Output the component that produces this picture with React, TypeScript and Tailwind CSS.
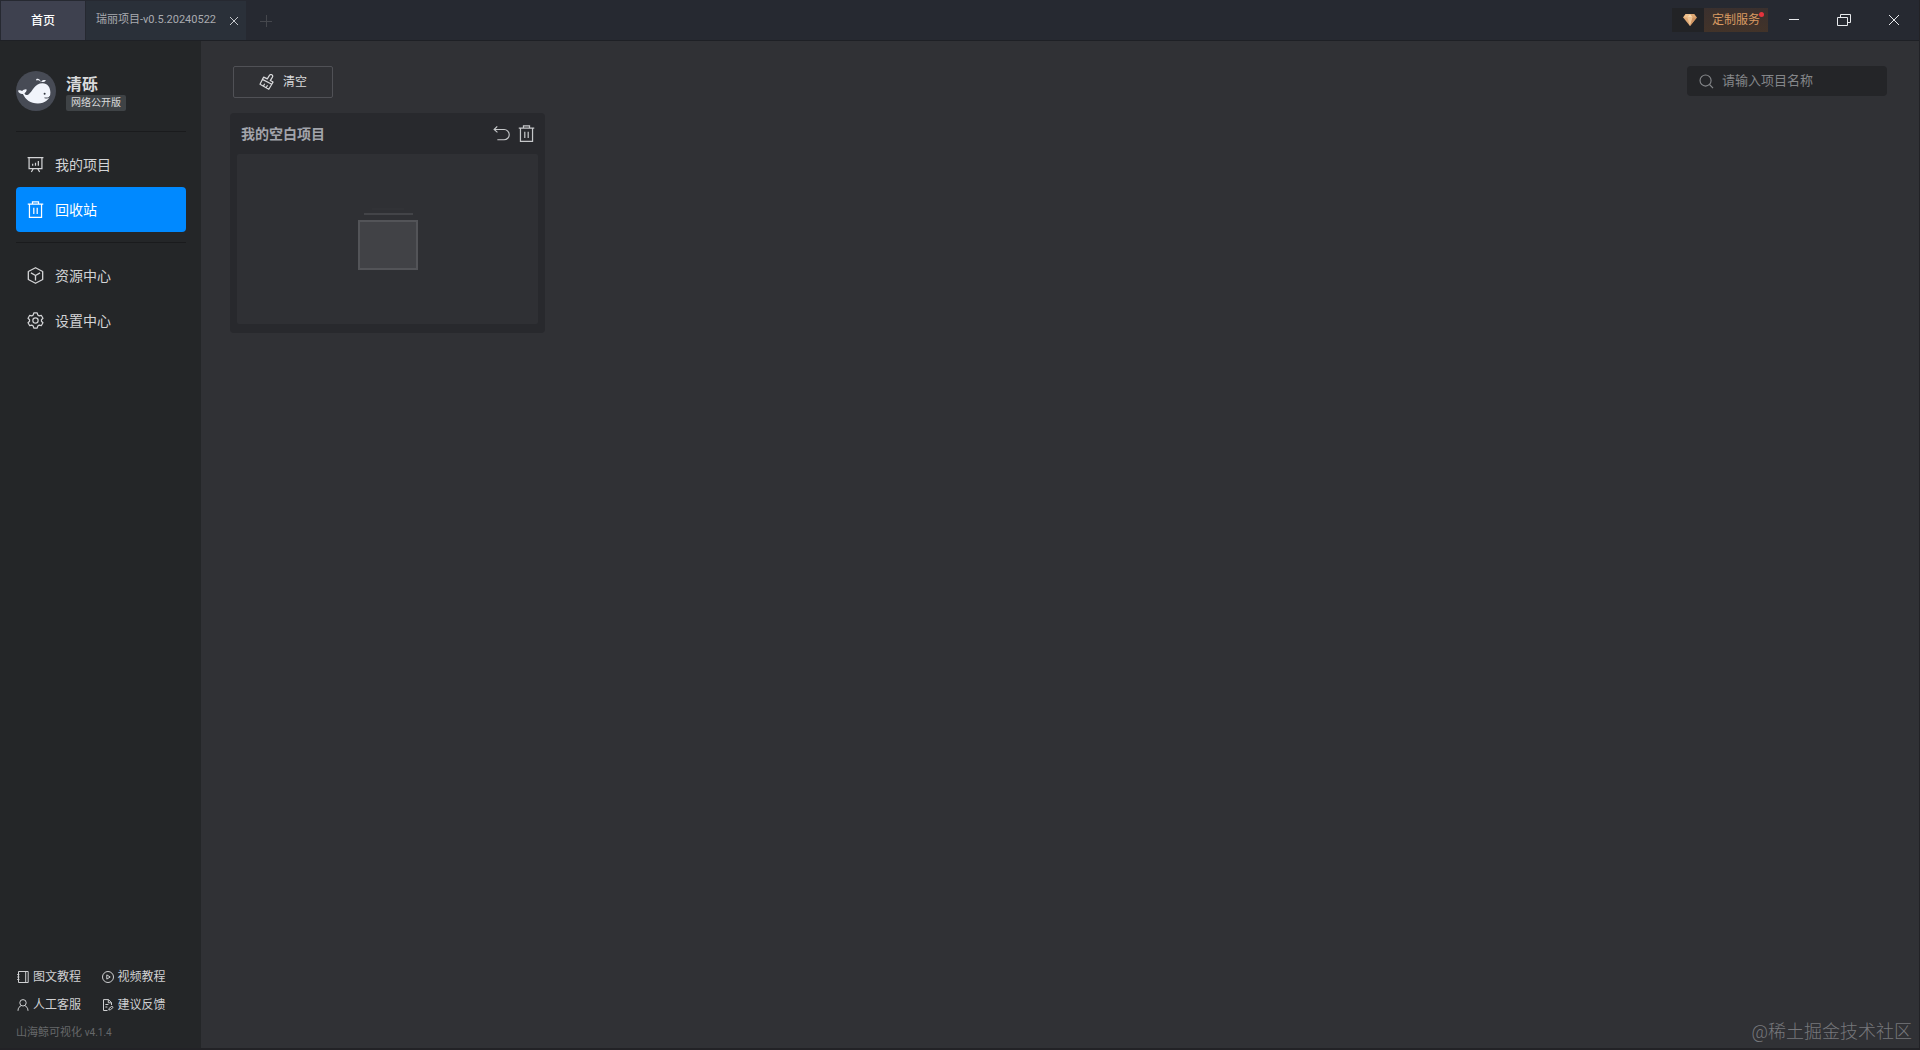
import React, { useState } from 'react';

interface IconProps {
  className?: string;
}

const stroke = {
  fill: 'none',
  stroke: 'currentColor',
  'aria-hidden': true,
} as const;

const BoardIcon: React.FC<IconProps> = ({ className }) => (
  <svg viewBox="0 0 18 18" className={className} strokeWidth="1.3" {...stroke}>
    <path d="M.6 1.7h16.8M2.2 1.7v11.6h13.6V1.7M6.8 13.3l-2.2 3.7M11.2 13.3l2.2 3.7M6 8.2v2M9 7.2v3M12 5.2v5" />
  </svg>
);

const TrashIcon: React.FC<IconProps> = ({ className }) => (
  <svg viewBox="0 0 18 18" className={className} strokeWidth="1.3" {...stroke}>
    <path d="M.8 3.3h16.4M5.8 3.3V1h6.4v2.3M2.6 3.3v14h12.8v-14M7.2 7.2v6.6M10.8 7.2v6.6" />
  </svg>
);

const CubeIcon: React.FC<IconProps> = ({ className }) => (
  <svg viewBox="0 0 18 18" className={className} strokeWidth="1.4" strokeLinejoin="round" {...stroke}>
    <path d="M9 .8l7.6 4v8.4L9 17.2l-7.6-4V4.8zM4.2 6.3L9 9l4.8-2.7M9 9v5.2" />
  </svg>
);

const GearIcon: React.FC<IconProps> = ({ className }) => (
  <svg viewBox="0 0 18 18" className={className} strokeWidth="1.3" strokeLinejoin="round" {...stroke}>
    <path d="M7.2 1h3.6l.6 2.2 1.5.9 2.2-.6 1.8 3.1-1.6 1.6v1.6l1.6 1.6-1.8 3.1-2.2-.6-1.5.9-.6 2.2H7.2l-.6-2.2-1.5-.9-2.2.6-1.8-3.1 1.6-1.6V8.2L1.1 6.6l1.8-3.1 2.2.6 1.5-.9z" />
    <circle cx="9" cy="9" r="2.8" />
  </svg>
);

const BrushIcon: React.FC<IconProps> = ({ className }) => (
  <svg viewBox="0 0 16 16" className={className} strokeWidth="1.2" strokeLinejoin="round" {...stroke}>
    <path d="M8.3 4.9l2.1-3.500a1.700 1.700 0 013 1.700l-2.100 3.500 2.700 1.500-1.200 2.200L3.400 5.400l1.300-2.300zM3.400 5.400L1 10.200l8.800 5.100 3-5M4.400 12.100l1.300-2.400M7.200 13.700l1.300-2.400" />
  </svg>
);

const UndoIcon: React.FC<IconProps> = ({ className }) => (
  <svg viewBox="0 0 18 18" className={className} strokeWidth="1.2" {...stroke}>
    <path d="M4.500 1.500L1.200 4.800l3.500 3M1.200 4.800h10.600a5.400 5.400 0 010 10.800H4.600" />
  </svg>
);

const SearchIcon: React.FC<IconProps> = ({ className }) => (
  <svg viewBox="0 0 16 16" className={className} strokeWidth="1.2" {...stroke}>
    <circle cx="7" cy="7" r="5.9" />
    <path d="M11.2 11.2l3.8 3.8" />
  </svg>
);

const BookIcon: React.FC<IconProps> = ({ className }) => (
  <svg viewBox="0 0 12 12" className={className} strokeWidth="1" {...stroke}>
    <path d="M1.500.5h9.700v11H1.500zM8.700.5v11M.2 3.500h2.200M.2 6h2.200M.2 8.500h2.200" />
  </svg>
);

const PlayIcon: React.FC<IconProps> = ({ className }) => (
  <svg viewBox="0 0 12 12" className={className} strokeWidth="1" {...stroke}>
    <circle cx="6" cy="6" r="5.5" />
    <path d="M4.8 3.9v4.2L8.2 6z" />
  </svg>
);

const PersonIcon: React.FC<IconProps> = ({ className }) => (
  <svg viewBox="0 0 12 12" className={className} strokeWidth="1" {...stroke}>
    <circle cx="6" cy="3.8" r="3.2" />
    <path d="M1 11.8c0-3 1.600-4.600 3.400-5.100M11 11.800c0-3-1.600-4.600-3.400-5.100" />
  </svg>
);

const FeedbackIcon: React.FC<IconProps> = ({ className }) => (
  <svg viewBox="0 0 12 12" className={className} strokeWidth="1" {...stroke}>
    <path d="M5.500 11.500H1.500V.6h5l3 3v2.400M6.300.6v3.200h3.200M3.400 5.500h3M3.400 8h2" />
    <path d="M6.800 11l.3-1.600 2.800-2.300 1.200 1.300-2.700 2.300z" />
  </svg>
);

const WhaleAvatar: React.FC<IconProps> = ({ className }) => (
  <svg viewBox="0 0 40 40" className={className} role="img" aria-label="清砾">
    <circle cx="20" cy="20" r="20" fill="#474b55" />
    <g fill="#f1f4fb">
      <path d="M2.200 19.500c1.200-.8 3 .1 4 .4.900-.9 2.200-1.700 4-1.600 1 .1.500 2.500-1.700 4 .6 1.800 2 2.300 4 1.100 2-1.200 3.700-4.400 5.500-6.600 2-2.700 5-4.500 8.500-4.500 5 0 7.900 4.100 7.900 9.300 0 6.700-5.400 10.900-12.500 10.900-7.600 0-12.200-3.600-15-9.400-2.500-.2-4.900-1.600-4.700-3.600z" />
      <path d="M24.600 11.200c-.2-1.500-1.700-2-4.600-1.800-.1-1.600 1.200-2 2.500-1.400 1.400.5 2.200 1.700 2.300 3.200zM25.300 11c0-1.600 1.300-2.200 4.500-2.100-.2 1.700-2.500 2.300-4.500 2.100z" />
    </g>
    <circle cx="28.6" cy="22.8" r="1" fill="#353943" />
    <path d="M28.500 26.800c2 .6 4 .2 5.500-1.400" fill="none" stroke="#474b55" />
  </svg>
);

const DiamondIcon: React.FC<IconProps> = ({ className }) => (
  <svg viewBox="0 0 16 14" className={className} aria-hidden="true">
    <path d="M3 0h10l3 4-8 10-8-10z" fill="#dfa873" />
    <path d="M3 0h5L5 4H0z" fill="#eec08d" />
    <path d="M8 0l3 4H5z" fill="#f8dab0" />
    <path d="M5 4h6L8 14z" fill="#f0c596" />
    <path d="M11 4h5L8 14z" fill="#cf9462" />
  </svg>
);

const menuItems = [
  { id: 'projects', label: '我的项目', Icon: BoardIcon },
  { id: 'recycle', label: '回收站', Icon: TrashIcon },
  { id: 'resources', label: '资源中心', Icon: CubeIcon },
  { id: 'settings', label: '设置中心', Icon: GearIcon },
];

const helpLinks = [
  { label: '图文教程', Icon: BookIcon },
  { label: '视频教程', Icon: PlayIcon },
  { label: '人工客服', Icon: PersonIcon },
  { label: '建议反馈', Icon: FeedbackIcon },
];

const TitleBar: React.FC = () => (
  <header className="flex h-[41px] shrink-0 items-stretch justify-between border-b border-[#1e2025] bg-[#262931]">
    <div className="flex items-stretch pt-px pl-px">
      <button className="w-[84px] bg-[#3e414f] text-xs font-medium text-white">首页</button>
      <div className="ml-px flex items-center bg-[#2a3039] pr-[2px] pl-[10px]">
        <button className="text-[11px] text-[#a9abb0]">瑞丽项目-v0.5.20240522</button>
        <button aria-label="关闭标签" className="ml-2 flex size-5 items-center justify-center text-[#c5c8cc]">
          <svg viewBox="0 0 10 10" className="size-[10px]" {...stroke}>
            <path d="M1 1l8 8M9 1L1 9" />
          </svg>
        </button>
      </div>
      <button aria-label="新建标签" className="flex w-10 items-center justify-center text-[#45474d]">
        <svg viewBox="0 0 12 12" className="size-3" {...stroke}>
          <path d="M6.500 0v12M0 6.500h12" />
        </svg>
      </button>
    </div>

    <div className="flex items-center">
      <button className="mr-px flex h-6 items-stretch text-xs text-[#d99a62]">
        <span className="flex w-8 items-center justify-center bg-[#222326] pl-1">
          <DiamondIcon className="h-3 w-[14px]" />
        </span>
        <span className="relative flex items-center bg-linear-to-b from-[#3a302e] to-[#423329] px-2">
          定制服务
          <span className="absolute top-1 right-1 size-[5px] rounded-full bg-[#e5333d]" />
        </span>
      </button>
      <button aria-label="最小化" className="flex h-full w-[50px] items-center justify-center text-[#e8eaed]">
        <svg viewBox="0 0 10 10" className="size-[10px]" {...stroke}>
          <path d="M0 4.500h10" />
        </svg>
      </button>
      <button aria-label="还原" className="flex h-full w-[50px] items-center justify-center text-[#e8eaed]">
        <svg viewBox="0 0 14 12" className="h-3 w-[14px]" {...stroke}>
          <path d="M.5 3.500h10v8H.5zM3.500 3.500v-3h10v8h-3" />
        </svg>
      </button>
      <button aria-label="关闭" className="flex h-full w-[50px] items-center justify-center text-[#e8eaed]">
        <svg viewBox="0 0 10 10" className="size-[10px]" {...stroke}>
          <path d="M0 0l10 10M10 0L0 10" />
        </svg>
      </button>
    </div>
  </header>
);

const Sidebar: React.FC = () => {
  const [active, setActive] = useState('recycle');

  const renderItem = ({ id, label, Icon }: (typeof menuItems)[number]) => (
    <button
      key={id}
      onClick={() => setActive(id)}
      className={`flex h-[45px] w-full items-center gap-[11px] rounded px-[11px] text-sm ${
        active === id ? 'bg-[#0089ff] text-white' : 'text-[#d3d4d6]'
      }`}
    >
      <Icon className="size-[17px]" />
      {label}
    </button>
  );

  return (
    <aside className="flex w-[201px] shrink-0 flex-col bg-[#242628] pt-[30px] pr-[15px] pb-[7px] pl-4">
      <div className="flex items-center gap-[10px]">
        <WhaleAvatar className="size-10" />
        <div className="flex flex-col items-start pt-1">
          <span className="text-base leading-5 font-bold text-[#d9dadb]">清砾</span>
          <span className="rounded-xs bg-[#3f4346] px-[5px] text-[10px] leading-4 text-[#d9dadb]">网络公开版</span>
        </div>
      </div>

      <nav className="mt-5">
        <div className="border-t border-[#1a1b1d] pt-[10px]">{menuItems.slice(0, 2).map(renderItem)}</div>
        <div className="mt-[10px] border-t border-[#1a1b1d] pt-[10px]">{menuItems.slice(2).map(renderItem)}</div>
      </nav>

      <div className="mt-auto">
        <div className="grid grid-cols-2 pl-px">
          {helpLinks.map(({ label, Icon }) => (
            <a key={label} href="#" className="flex h-7 items-center gap-1 text-xs text-[#cfd0d2]">
              <Icon className="size-3" />
              {label}
            </a>
          ))}
        </div>
        <p className="mt-[6px] text-[11px] leading-4 text-[#66686a]">
          山海鲸可视化 <span className="text-[10px]">v4.1.4</span>
        </p>
      </div>
    </aside>
  );
};

const ProjectCard: React.FC<{ name: string }> = ({ name }) => (
  <article className="w-[315px] rounded bg-[#28292d] px-[7px] pb-[9px]">
    <div className="flex h-[41px] items-center justify-between pr-[3px] pl-1">
      <h2 className="text-sm font-bold text-[#a2a4ab]">{name}</h2>
      <div className="flex gap-2 text-[#c6c8ca]">
        <button aria-label="还原项目">
          <UndoIcon className="size-[17px]" />
        </button>
        <button aria-label="删除项目">
          <TrashIcon className="size-[17px]" />
        </button>
      </div>
    </div>
    <div className="flex h-[170px] items-center justify-center rounded-xs bg-[#2f3034]">
      <svg viewBox="0 0 60 62" className="h-[62px] w-[60px]" aria-hidden="true">
        <path d="M14 1h32" stroke="#343539" />
        <path d="M6 6h49" stroke="#434448" strokeWidth="2" />
        <rect x="1" y="13" width="58" height="48" fill="#414246" stroke="#535458" strokeWidth="2" />
      </svg>
    </div>
  </article>
);

const App: React.FC = () => {
  const [keyword, setKeyword] = useState('');
  const projects = ['我的空白项目'];

  return (
    <div className="relative flex min-h-screen flex-col border-r border-b-2 border-[#222226] bg-[#303135] font-[Roboto,'Noto_Sans_CJK_SC',sans-serif]">
      <TitleBar />
      <div className="flex flex-1">
        <Sidebar />
        <main className="flex-1 pt-[25px] pr-8 pl-[29px]">
          <div className="flex items-start justify-between pl-[3px]">
            <button className="flex h-8 w-[100px] items-center justify-center gap-2 rounded-xs border border-[#505156] text-xs text-[#d9dadc]">
              <BrushIcon className="size-4" />
              清空
            </button>
            <label className="flex h-[30px] w-[200px] items-center gap-2 rounded bg-[#242528] px-3">
              <SearchIcon className="size-[15px] shrink-0 text-[#85878a]" />
              <input
                type="text"
                aria-label="搜索项目"
                placeholder="请输入项目名称"
                value={keyword}
                onChange={(e) => setKeyword(e.target.value)}
                className="w-full min-w-0 bg-transparent text-[13px] text-[#d9dadc] outline-none placeholder:text-[#85878a]"
              />
            </label>
          </div>
          <div className="mt-[15px] flex flex-wrap gap-6">
            {projects
              .filter((name) => name.includes(keyword))
              .map((name) => (
                <ProjectCard key={name} name={name} />
              ))}
          </div>
        </main>
      </div>
      <p className="absolute right-[7px] bottom-[2px] text-lg leading-7 font-light text-[#77787c]">@稀土掘金技术社区</p>
    </div>
  );
};

export default App;
